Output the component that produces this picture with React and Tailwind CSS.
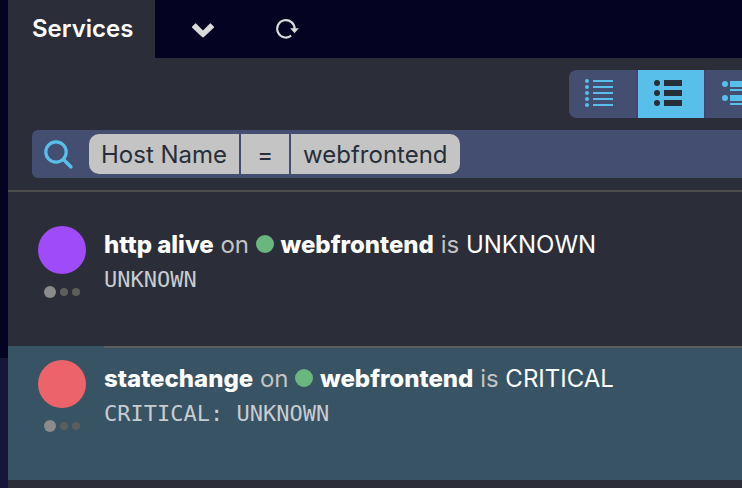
const services = [
  {
    name: "http alive",
    host: "webfrontend",
    state: "UNKNOWN",
    output: "UNKNOWN",
    ball: "bg-[#9f4bf9]",
    selected: false,
  },
  {
    name: "statechange",
    host: "webfrontend",
    state: "CRITICAL",
    output: "CRITICAL: UNKNOWN",
    ball: "bg-[#ed636c]",
    selected: true,
  },
];

function MinimalIcon() {
  return (
    <svg className="h-7 w-7" viewBox="0 0 28 28" fill="currentColor">
      {[2, 8, 14, 20, 26].map((y) => (
        <g key={y}>
          <circle cx="2" cy={y} r="2" />
          <rect x="8" y={y - 1} width="20" height="2" />
        </g>
      ))}
    </svg>
  );
}

function CommonIcon() {
  return (
    <svg className="h-7 w-7" viewBox="0 0 28 28" fill="currentColor">
      {[4, 14, 24].map((y) => (
        <g key={y}>
          <circle cx="3" cy={y} r="3" />
          <rect x="10" y={y - 3} width="18" height="6" />
        </g>
      ))}
    </svg>
  );
}

function DetailedIcon() {
  return (
    <svg className="h-7 w-7" viewBox="0 0 28 28" fill="currentColor">
      {[5, 19].map((y) => (
        <g key={y}>
          <circle cx="3" cy={y} r="3" />
          <rect x="8" y={y - 3} width="20" height="6" />
          <rect x="8" y={y + 5} width="20" height="2" />
        </g>
      ))}
    </svg>
  );
}

function Tabs() {
  return (
    <nav className="flex bg-[#040422] text-[#dadada]">
      <a href="#services" className="bg-[#2b2e39] py-[13px] pr-[22px] pl-6 text-2xl font-semibold text-white">
        Services
      </a>
      <button aria-label="More" className="flex w-24 items-center justify-center">
        <svg className="h-6 w-6" viewBox="0 0 24 24" fill="currentColor">
          <path d="M4 6.7 1.2 9.5a.9.9 0 0 0 0 1.3l9.9 9.2a1.3 1.3 0 0 0 1.8 0l9.9-9.2a.9.9 0 0 0 0-1.3L20 6.7a.9.9 0 0 0-1.3 0L12 13.4 5.3 6.7a.9.9 0 0 0-1.3 0Z" />
        </svg>
      </button>
      <button aria-label="Refresh" className="flex w-[72px] items-center justify-center">
        <svg className="h-6 w-6" viewBox="0 0 24 24">
          <path d="M16.2 18.7A8.7 8.7 0 1 1 19.6 12" fill="none" stroke="currentColor" strokeWidth="2.2" />
          <path d="M15.2 11.2h8.6l-4.3 5Z" fill="currentColor" />
        </svg>
      </button>
    </nav>
  );
}

function ViewSwitcher() {
  return (
    <div className="-mr-8 flex gap-[2px] overflow-hidden rounded-lg bg-[#474174] text-[#58bfea]">
      <button aria-label="Minimal view" className="flex h-12 w-[67px] items-center bg-[#444e70] pb-[2px] pl-4">
        <MinimalIcon />
      </button>
      <button
        aria-label="Common view"
        className="flex h-12 w-[66px] items-center bg-[#58bfea] pb-[2px] pl-4 text-[#282e39]"
      >
        <CommonIcon />
      </button>
      <button aria-label="Detailed view" className="flex h-12 w-[68px] items-center bg-[#444e70] pb-[2px] pl-4">
        <DetailedIcon />
      </button>
    </div>
  );
}

function SearchBar() {
  return (
    <div className="flex items-center rounded-l-md bg-[#444e70] py-1 pl-3 text-2xl text-[#282e39]">
      <button aria-label="Search" className="mr-4 text-[#58bfea]">
        <svg className="h-[29px] w-[29px]" viewBox="0 0 29 29" fill="none" stroke="currentColor">
          <circle cx="12" cy="12" r="10.2" strokeWidth="3.2" />
          <path d="m19.5 19.5 7.3 7.3" strokeWidth="3.6" strokeLinecap="round" />
        </svg>
      </button>
      <div className="flex h-10 gap-[2px] leading-[42px]">
        <button className="rounded-l-[10px] bg-[#c4c4c4] px-3">Host Name</button>
        <button className="w-12 bg-[#c4c4c4]">=</button>
        <button className="rounded-r-[10px] bg-[#c4c4c4] px-3">webfrontend</button>
      </div>
    </div>
  );
}

function ServiceRow({ service }) {
  return (
    <li className={service.selected ? "flex bg-[#375364]" : "flex"}>
      <div className="flex w-24 shrink-0 flex-col items-center gap-3 pt-[14px] pl-3">
        <span className={`size-12 rounded-full ${service.ball}`} />
        <span className="flex items-center gap-1">
          <i className="size-3 rounded-full bg-[#8b8b8b]" />
          <i className="size-2 rounded-full bg-[#5d5d5d]" />
          <i className="size-2 rounded-full bg-[#5d5d5d]" />
        </span>
      </div>
      <div
        className={
          service.selected
            ? "min-h-[134px] min-w-0 flex-1 border-t-2 border-[#5d5d5d] pt-[13px]"
            : "min-h-[134px] min-w-0 flex-1 pt-[15px]"
        }
      >
        <h2 className="text-2xl/9 text-[#c4c4c4]">
          <a href="#service" className="font-extrabold text-white">{service.name}</a> on{" "}
          <span className="inline-block size-[18px] rounded-full bg-[#69b77f]" />{" "}
          <a href="#host" className="font-extrabold text-white">{service.host}</a> is{" "}
          <span className="text-white">{service.state}</span>
        </h2>
        <p className="font-['DejaVu_Sans_Mono',monospace] text-[22px] leading-[34px] text-[#c8cccf]">
          {service.output}
        </p>
      </div>
    </li>
  );
}

export default function App() {
  return (
    <div className="flex min-h-screen overflow-hidden bg-[#2b2e39] font-['Inter',sans-serif]">
      <aside className="flex w-2 shrink-0 flex-col bg-[#040422]">
        <div className="mt-[358px] flex-1 bg-[#171539]" />
      </aside>
      <main className="min-w-0 flex-1">
        <Tabs />
        <div className="border-b-2 border-[#4c4c4c] py-3 pl-6">
          <div className="mb-3 flex justify-end">
            <ViewSwitcher />
          </div>
          <SearchBar />
        </div>
        <ul className="pt-5">
          {services.map((s) => (
            <ServiceRow key={s.name} service={s} />
          ))}
        </ul>
      </main>
    </div>
  );
}
